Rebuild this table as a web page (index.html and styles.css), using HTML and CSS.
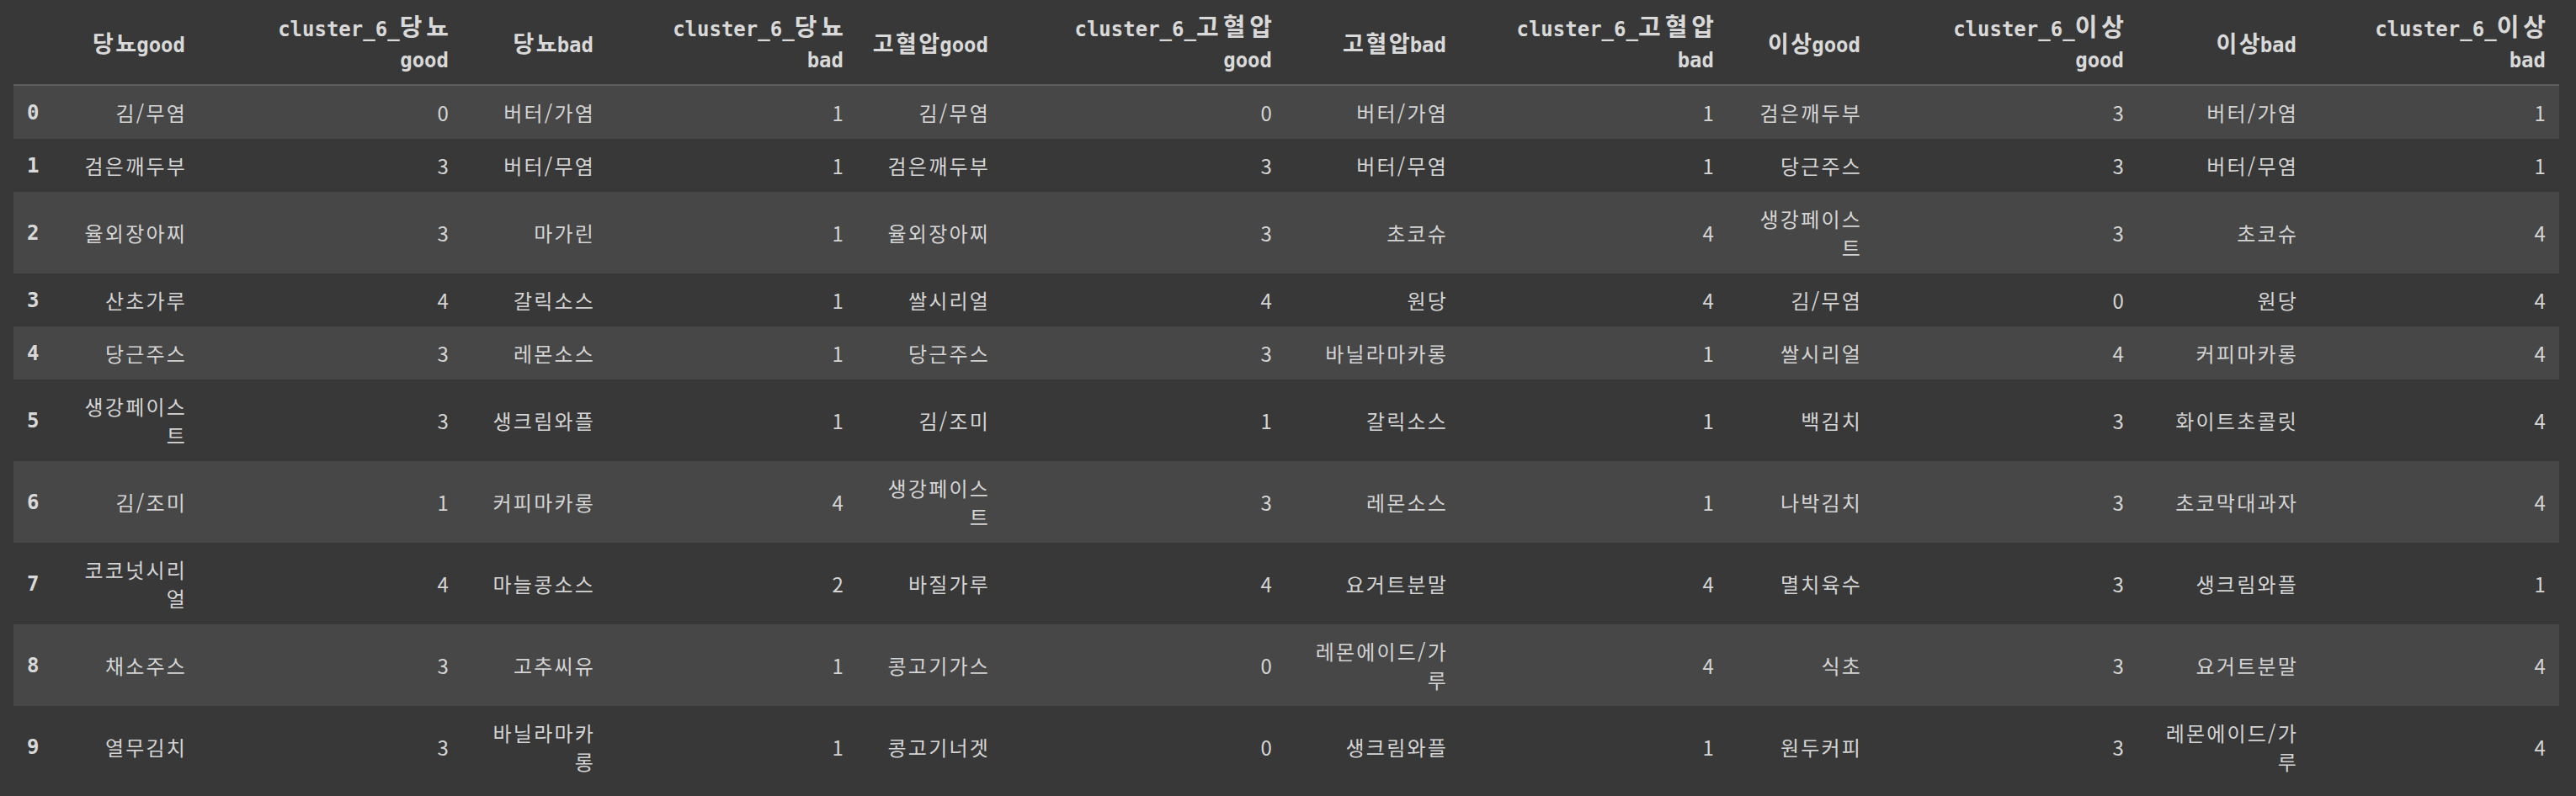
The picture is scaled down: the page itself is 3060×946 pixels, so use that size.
FILE: index.html
```html
<!DOCTYPE html>
<html lang="ko">
<head>
<meta charset="utf-8">
<title>dataframe</title>
<link rel="stylesheet" href="styles.css">
</head>
<body>
<div class="output">
<table class="dataframe">
<colgroup>
<col class="c-idx"><col class="c1"><col class="c2"><col class="c3"><col class="c4"><col class="c5"><col class="c6"><col class="c7"><col class="c8"><col class="c9"><col class="c10"><col class="c11"><col class="c12">
</colgroup>
<thead>
<tr>
<th class="blank"></th>
<th><span class="ko">당뇨</span>good</th>
<th>cluster_6_<span class="ko ko-wide">당뇨</span><br>good</th>
<th><span class="ko">당뇨</span>bad</th>
<th>cluster_6_<span class="ko ko-wide">당뇨</span><br>bad</th>
<th><span class="ko">고혈압</span>good</th>
<th>cluster_6_<span class="ko ko-wide">고혈압</span><br>good</th>
<th><span class="ko">고혈압</span>bad</th>
<th>cluster_6_<span class="ko ko-wide">고혈압</span><br>bad</th>
<th><span class="ko">이상</span>good</th>
<th>cluster_6_<span class="ko ko-wide">이상</span><br>good</th>
<th><span class="ko">이상</span>bad</th>
<th>cluster_6_<span class="ko ko-wide">이상</span><br>bad</th>
</tr>
</thead>
<tbody>
<tr><th>0</th><td>김/무염</td><td>0</td><td>버터/가염</td><td>1</td><td>김/무염</td><td>0</td><td>버터/가염</td><td>1</td><td>검은깨두부</td><td>3</td><td>버터/가염</td><td>1</td></tr>
<tr><th>1</th><td>검은깨두부</td><td>3</td><td>버터/무염</td><td>1</td><td>검은깨두부</td><td>3</td><td>버터/무염</td><td>1</td><td>당근주스</td><td>3</td><td>버터/무염</td><td>1</td></tr>
<tr><th>2</th><td>율외장아찌</td><td>3</td><td>마가린</td><td>1</td><td>율외장아찌</td><td>3</td><td>초코슈</td><td>4</td><td>생강페이스트</td><td>3</td><td>초코슈</td><td>4</td></tr>
<tr><th>3</th><td>산초가루</td><td>4</td><td>갈릭소스</td><td>1</td><td>쌀시리얼</td><td>4</td><td>원당</td><td>4</td><td>김/무염</td><td>0</td><td>원당</td><td>4</td></tr>
<tr><th>4</th><td>당근주스</td><td>3</td><td>레몬소스</td><td>1</td><td>당근주스</td><td>3</td><td>바닐라마카롱</td><td>1</td><td>쌀시리얼</td><td>4</td><td>커피마카롱</td><td>4</td></tr>
<tr><th>5</th><td>생강페이스트</td><td>3</td><td>생크림와플</td><td>1</td><td>김/조미</td><td>1</td><td>갈릭소스</td><td>1</td><td>백김치</td><td>3</td><td>화이트초콜릿</td><td>4</td></tr>
<tr><th>6</th><td>김/조미</td><td>1</td><td>커피마카롱</td><td>4</td><td>생강페이스트</td><td>3</td><td>레몬소스</td><td>1</td><td>나박김치</td><td>3</td><td>초코막대과자</td><td>4</td></tr>
<tr><th>7</th><td>코코넛시리얼</td><td>4</td><td>마늘콩소스</td><td>2</td><td>바질가루</td><td>4</td><td>요거트분말</td><td>4</td><td>멸치육수</td><td>3</td><td>생크림와플</td><td>1</td></tr>
<tr><th>8</th><td>채소주스</td><td>3</td><td>고추씨유</td><td>1</td><td>콩고기가스</td><td>0</td><td>레몬에이드/가루</td><td>4</td><td>식초</td><td>3</td><td>요거트분말</td><td>4</td></tr>
<tr><th>9</th><td>열무김치</td><td>3</td><td>바닐라마카롱</td><td>1</td><td>콩고기너겟</td><td>0</td><td>생크림와플</td><td>1</td><td>원두커피</td><td>3</td><td>레몬에이드/가루</td><td>4</td></tr>
</tbody>
</table>
</div>
</body>
</html>
```
FILE: styles.css
```css
html, body {
  margin: 0;
  padding: 0;
  background: #383838;
}

.output {
  padding: 9px 20px 0 16px;
}

.dataframe {
  border-collapse: collapse;
  border-spacing: 0;
  table-layout: fixed;
  width: 3024px;
  color: #d4d4d4;
  font-family: "Noto Sans CJK KR", "Noto Sans", sans-serif;
  font-size: 24px;
}

.c-idx { width: 62px; }
.c1 { width: 158px; }
.c2 { width: 313px; }
.c3 { width: 172px; }
.c4 { width: 297px; }
.c5 { width: 172px; }
.c6 { width: 337px; }
.c7 { width: 207px; }
.c8 { width: 318px; }
.c9 { width: 174px; }
.c10 { width: 313px; }
.c11 { width: 205px; }
.c12 { width: 296px; }

.dataframe td,
.dataframe th {
  line-height: 34px;
  text-align: right;
  vertical-align: middle;
  border: none;
}

.dataframe td {
  padding: 15px 14px 14px 18px;
  letter-spacing: 2.2px;
}

.dataframe th {
  padding: 15px 16px 14px;
  font-family: "DejaVu Sans Mono", "Noto Sans CJK KR", monospace;
  font-weight: bold;
  color: #d9d9d9;
}

.dataframe tbody th {
  text-align: left;
}

.dataframe thead th {
  padding: 8px 16px 9px;
  line-height: 37px;
  border-bottom: 2px solid #5f5f5f;
}

.dataframe thead .ko {
  font-family: "Noto Sans CJK KR", sans-serif;
  font-size: 27px;
  line-height: 20px;
  font-weight: bold;
  letter-spacing: 2.5px;
  margin-right: -2.5px;
}

.dataframe thead .ko-wide {
  font-size: 29px;
  letter-spacing: 5px;
  margin-right: -5px;
}

.dataframe tbody tr:nth-child(odd) {
  background: #474747;
}
```
